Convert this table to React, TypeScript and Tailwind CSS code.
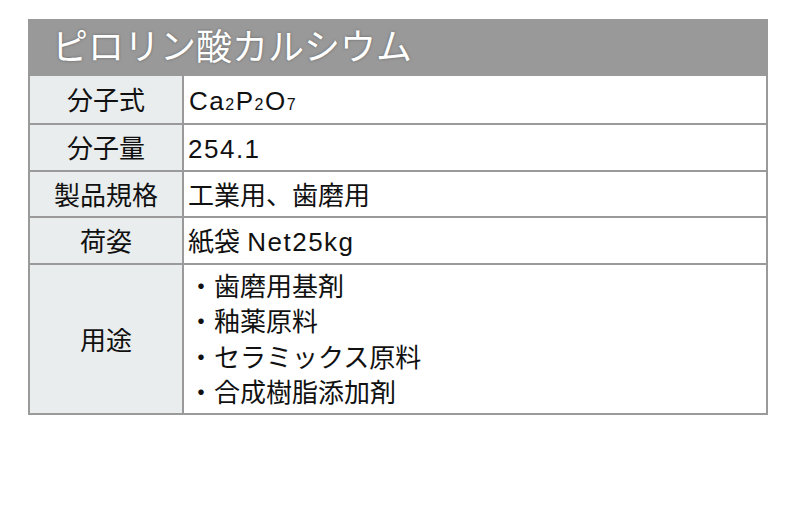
import React from "react";

const font = { fontFamily: '"Liberation Sans", "Noto Sans CJK JP", "Noto Sans", sans-serif' };

function Row({
  label,
  children,
  h,
  first,
}: {
  label: string;
  children: React.ReactNode;
  h: string;
  first?: boolean;
}) {
  return (
    <div className={`flex ${h} ${first ? "" : "border-t-2 border-[#9a9a9a]"}`}>
      <div className="w-[154px] shrink-0 bg-[#e9eded] flex items-center justify-center border-r-2 border-[#9a9a9a] pt-[3px]">
        {label}
      </div>
      <div className="flex-1 flex items-center pl-[4px] pt-[3px]">{children}</div>
    </div>
  );
}

export default function App() {
  return (
    <div className="w-[790px] h-[510px] bg-white pt-[19px] pl-[28px] text-[#111] leading-none" style={font}>
      <div className="w-[740px]">
        <div className="h-[57px] bg-[#999999] flex items-center pl-[24px]">
          <span className="text-white text-[36px] [text-shadow:0_0_3px_rgba(0,0,0,0.35)]">
            ピロリン酸カルシウム
          </span>
        </div>
        <div className="border-2 border-t-0 border-[#9a9a9a] text-[26px]">
          <Row label="分子式" h="h-[47px]" first>
            <span className="tracking-[1.5px] pl-[1px]">
              Ca<span className="text-[16px]">2</span>P<span className="text-[16px]">2</span>O
              <span className="text-[16px]">7</span>
            </span>
          </Row>
          <Row label="分子量" h="h-[47px]">
            <span className="tracking-[1.5px]">254.1</span>
          </Row>
          <Row label="製品規格" h="h-[46px]">
            <span>工業用、歯磨用</span>
          </Row>
          <Row label="荷姿" h="h-[47px]">
            <span>
              紙袋 <span className="tracking-[1.5px]">Net25kg</span>
            </span>
          </Row>
          <Row label="用途" h="h-[150px]">
            <div className="flex flex-col leading-[35.5px]">
              <span>・歯磨用基剤</span>
              <span>・釉薬原料</span>
              <span>・セラミックス原料</span>
              <span>・合成樹脂添加剤</span>
            </div>
          </Row>
        </div>
      </div>
    </div>
  );
}
